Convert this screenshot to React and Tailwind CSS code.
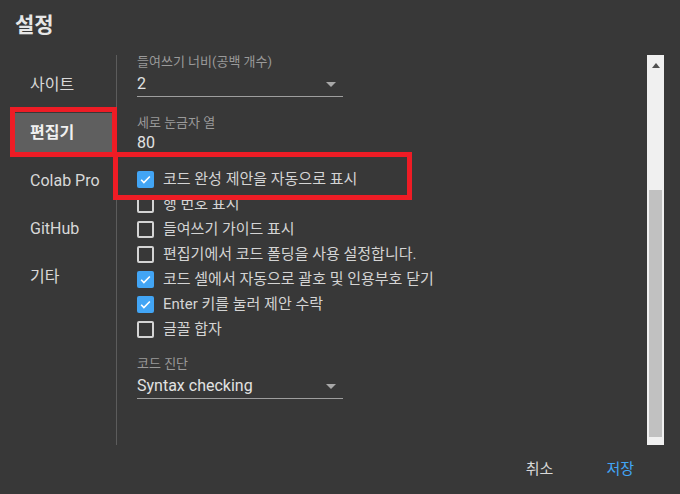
import React from 'react';

const navItems = ['사이트', '편집기', 'Colab Pro', 'GitHub', '기타'];

const options = [
  { label: '코드 완성 제안을 자동으로 표시', checked: true },
  { label: '행 번호 표시', checked: false },
  { label: '들여쓰기 가이드 표시', checked: false },
  { label: '편집기에서 코드 폴딩을 사용 설정합니다.', checked: false },
  { label: '코드 셀에서 자동으로 괄호 및 인용부호 닫기', checked: true },
  { label: 'Enter 키를 눌러 제안 수락', checked: true },
  { label: '글꼴 합자', checked: false },
];

function Checkbox({ checked }) {
  if (checked) {
    return (
      <span className="w-[17px] h-[17px] rounded-[2px] bg-[#42a5f5] flex items-center justify-center shrink-0">
        <svg width="13" height="13" viewBox="0 0 24 24" fill="none">
          <path d="M4 12.5l5 5L20 6.5" stroke="white" strokeWidth="3" />
        </svg>
      </span>
    );
  }
  return <span className="w-[17px] h-[17px] rounded-[2px] border-2 border-[#d4d4d4] shrink-0" />;
}

function Caret() {
  return (
    <svg width="10" height="5" viewBox="0 0 10 5" className="absolute right-[7px] top-[10px]">
      <path d="M0 0h10L5 5z" fill="#a8a8a8" />
    </svg>
  );
}

function SelectField({ label, value, top = 'mt-0' }) {
  return (
    <div className={top}>
      <div className="h-[14px] leading-[14px] text-[13px] text-[#9a9a9a]">{label}</div>
      <div className="relative w-[206px] mt-[3px] h-[25px] leading-[24px] text-[16px] text-[#e2e2e2] border-b border-[#9e9e9e]">
        {value}
        <Caret />
      </div>
    </div>
  );
}

export default function App() {
  return (
    <div
      className="relative w-[680px] h-[494px] bg-[#383838] overflow-hidden"
      style={{ fontFamily: 'Roboto, "Noto Sans CJK KR", sans-serif' }}
    >
      {/* header */}
      <div className="h-[55px] pl-[15px] pt-[11px]">
        <h1 className="text-[21px] leading-[28px] font-bold text-[#e6e6e6]">설정</h1>
      </div>

      <div className="flex h-[390px]">
        {/* nav */}
        <div className="w-[117px] border-r border-[#5c5c5c] pt-[10px] flex flex-col gap-[8px]">
          {navItems.map((item) => (
            <div
              key={item}
              className={
                'ml-[15px] w-[97px] h-[40px] pl-[15px] flex items-center text-[16px] ' +
                (item === '편집기' ? 'bg-[#5f5f5f] text-[#f0f0f0] font-bold' : 'text-[#d8d8d8]')
              }
            >
              {item}
            </div>
          ))}
        </div>

        {/* content */}
        <div className="flex-1 pl-[20px]">
          <SelectField label="들여쓰기 너비(공백 개수)" value="2" />

          <div className="mt-[19px]">
            <div className="h-[14px] leading-[14px] text-[13px] text-[#9a9a9a]">세로 눈금자 열</div>
            <div className="w-[206px] mt-[2px] h-[23px] leading-[22px] text-[16px] text-[#e2e2e2] border-b border-[#9e9e9e]">
              80
            </div>
          </div>

          <div className="mt-[12px] flex flex-col">
            {options.map((o) => (
              <div key={o.label} className="h-[25px] flex items-center gap-[9px] text-[15px] text-[#d4d4d4]">
                <Checkbox checked={o.checked} />
                <span>{o.label}</span>
              </div>
            ))}
          </div>

          <SelectField label="코드 진단" value="Syntax checking" top="mt-[15px]" />
        </div>

        {/* scrollbar */}
        <div className="w-[17px] mr-[16px] bg-[#f0f0f0] flex flex-col items-center">
          <svg width="8" height="5" viewBox="0 0 8 5" className="mt-[8px]">
            <path d="M0 5h8L4 0z" fill="#505050" />
          </svg>
          <div className="w-[13px] h-[247px] mt-[122px] bg-[#c1c1c1]" />
        </div>
      </div>

      {/* footer */}
      <div className="h-[49px] flex items-center justify-end gap-[53px] pr-[46px] text-[15px]">
        <button className="text-[#d8d8d8]">취소</button>
        <button className="text-[#42a5f5]">저장</button>
      </div>

      {/* annotation boxes */}
      <div className="absolute left-[10px] top-[107px] w-[107px] h-[50px] border-[5px] border-[#ee1c25]" />
      <div className="absolute left-[113px] top-[152px] w-[299px] h-[48px] border-[5px] border-[#ee1c25]" />
    </div>
  );
}
